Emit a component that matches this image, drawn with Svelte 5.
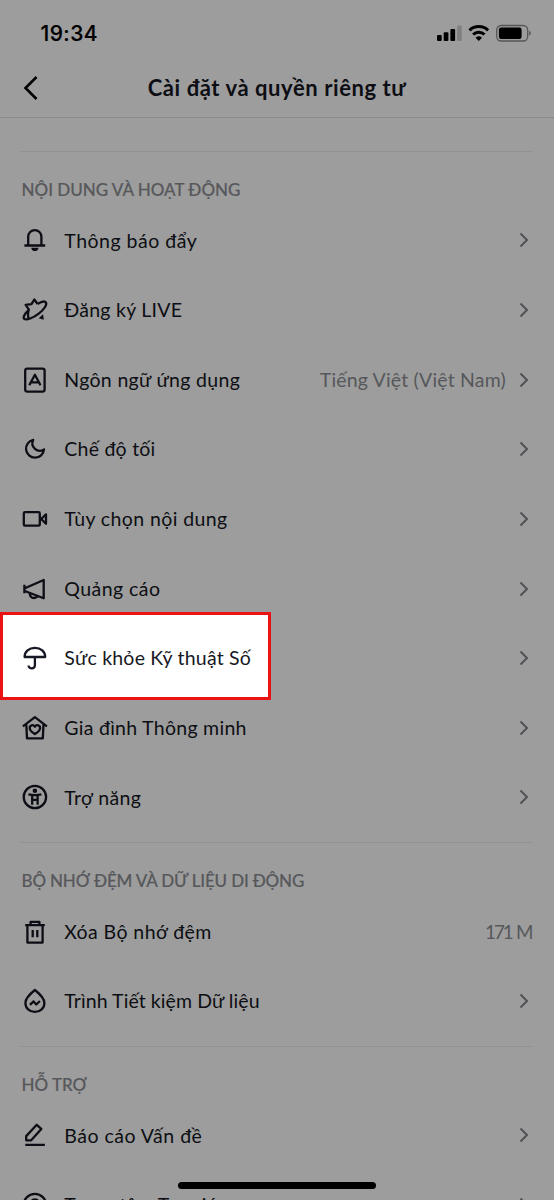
<script>
  const sections = [
    {
      title: 'NỘI DUNG VÀ HOẠT ĐỘNG',
      tracking: 0,
      rows: [
        { icon: 'bell', label: 'Thông báo đẩy', tracking: 0.5 },
        { icon: 'star', label: 'Đăng ký LIVE', tracking: 0.25 },
        { icon: 'lang', label: 'Ngôn ngữ ứng dụng', tracking: 0.32, value: 'Tiếng Việt (Việt Nam)' },
        { icon: 'moon', label: 'Chế độ tối', tracking: 0.24 },
        { icon: 'video', label: 'Tùy chọn nội dung', tracking: 0.4 },
        { icon: 'horn', label: 'Quảng cáo', tracking: 0.45 },
        { icon: 'umbrella', label: 'Sức khỏe Kỹ thuật Số', tracking: 0.22 },
        { icon: 'home', label: 'Gia đình Thông minh', tracking: 0.28 },
        { icon: 'access', label: 'Trợ năng', tracking: 0.38 }
      ]
    },
    {
      title: 'BỘ NHỚ ĐỆM VÀ DỮ LIỆU DI ĐỘNG',
      tracking: -0.16,
      rows: [
        { icon: 'trash', label: 'Xóa Bộ nhớ đệm', tracking: 0.42, value: '171 M', plain: true },
        { icon: 'drop', label: 'Trình Tiết kiệm Dữ liệu', tracking: 0.08 }
      ]
    },
    {
      title: 'HỖ TRỢ',
      tracking: 0,
      rows: [
        { icon: 'pen', label: 'Báo cáo Vấn đề', tracking: 0.5 },
        { icon: 'help', label: 'Trung tâm Trợ giúp', tracking: 0.3 }
      ]
    }
  ];
</script>

{#snippet glyph(name)}
  <svg class="icon" viewBox="0 0 28 28">
    {#if name === 'bell'}
      <path d="M7.200 19.500V10.700a6.600 6.600 0 0 1 13.200 0v8.800M3.400 19.500h20.800" />
      <path class="fill" d="M10.200 21.700h7.400c-.3 2.100-1.700 3.400-3.700 3.400s-3.400-1.300-3.700-3.400z" />
    {:else if name === 'star'}
      <path d="M16.600 8 13.300 3.500 10.500 8.100 4.600 8.900 7.800 13.400 7 17.500 7.400 23.300" />
      <path d="M16.600 8C20.500 5.500 24 5 24.900 6.400c1.300 2.200-1.600 7-7.200 11.200-5.500 4.300-12.400 7-14.400 5.300-1.600-1.400.3-5.500 4.400-8.800" />
      <path class="fill" d="m17.700 22.300 4.400-4 .7 5.500z" />
    {:else if name === 'lang'}
      <rect x="4.200" y="2.700" width="19.400" height="22.900" rx="2" />
      <path d="M8.300 19.300 13.900 8.700 19.500 19.300M10.200 16.300h7.400" />
    {:else if name === 'moon'}
      <path d="M12.200 4.900A9 9 0 1 0 23 14.500 7.500 7.500 0 0 1 12.200 4.900z" />
    {:else if name === 'video'}
      <rect x="2.800" y="7.200" width="16" height="13.500" rx="1.200" />
      <path d="m25 9.300-4.800 4.700L25 18.800z" />
    {:else if name === 'horn'}
      <path d="M3.400 9.800v8.400M3.800 13.300 22.700 5v18.300L3.800 16M8.700 18.300c.2 3.100 2 4.700 4.400 4.700 1.700 0 3.100-.9 3.600-2.300" />
    {:else if name === 'umbrella'}
      <path d="M3.600 13C3.600 7.600 8 3.800 13.900 3.800S24.200 7.600 24.200 13zM13.900 13v8.300c0 4-6.300 4-6.300.2" />
    {:else if name === 'home'}
      <path d="M1.900 12.300 13.900 3.100l12 9.200M5.300 10.500l.7 13.900h15.800l.7-13.900" />
      <path d="M13.900 20C10.400 17.900 8.700 15.900 8.700 13.900c0-2.900 3.700-3.700 5.200-1.200 1.500-2.500 5.200-1.700 5.200 1.200 0 2-1.700 4-5.200 6.100z" />
    {:else if name === 'access'}
      <circle cx="13.900" cy="14" r="11.200" />
      <circle class="fill" cx="13.900" cy="7.700" r="2.300" />
      <path d="M7.400 11.300c4.300 1 8.700 1 13 0M11.200 12v9.700M16.600 12v9.700M11.200 16.800h5.400" />
    {:else if name === 'trash'}
      <path d="M4.200 7.200h19.600M9.600 6.900V3.900h8.800v3M6.400 7.600v17h15.200v-17M11.700 12v7.300M16.300 12v7.300" />
    {:else if name === 'drop'}
      <path d="M13.900 3c5 4 9.500 7.900 9.500 12.900 0 5.300-4 9-9.500 9s-9.500-3.700-9.500-9C4.400 10.900 8.900 7 13.900 3z" />
      <path d="M8.900 17.900 12.600 14.400 15.300 17.500 18.900 14" />
    {:else if name === 'pen'}
      <path d="M4.300 23.900h19.600M5.200 19.300v-4.200L15.700 3.800l4.600 4.100L10.200 19.300z" />
    {:else}
      <circle cx="13.900" cy="14" r="11.200" />
      <path d="M10.500 11.500c0-4 6.800-4 6.800 0 0 2.800-3.400 2.500-3.400 5" />
    {/if}
  </svg>
{/snippet}

<div class="phone">
  <div class="status">
    <span class="time">19:34</span>
    <svg class="signals" width="98" height="20" viewBox="0 0 98 20">
      <rect x="0" y="11" width="4.700" height="6" rx="1" />
      <rect x="6.700" y="8.300" width="4.700" height="8.700" rx="1" />
      <rect x="13.400" y="5" width="4.700" height="12" rx="1" />
      <rect x="20.100" y="1.500" width="4.700" height="15.500" rx="1" opacity=".18" />
      <g fill="none" stroke="#000" stroke-width="3">
        <path d="M32.500 6.300a13.500 13.500 0 0 1 18.600 0" />
        <path d="M36.100 10.500a8.400 8.400 0 0 1 11.400 0" />
      </g>
      <path d="M38.600 13.700a5 5 0 0 1 6.400 0L41.800 17z" />
      <rect x="59.700" y="1.500" width="31" height="15.500" rx="4.500" fill="none" stroke="#000" stroke-opacity=".45" stroke-width="1.300" />
      <rect x="61.900" y="3.500" width="22.700" height="11.500" rx="2.200" />
      <path d="M92.300 6.800c2 .8 2 4 0 4.800z" opacity=".5" />
    </svg>
  </div>
  <header>
    <svg class="back" width="16" height="26" viewBox="0 0 16 26"><path d="M13.500 2 2.500 13l11 11" /></svg>
    <h1>Cài đặt và quyền riêng tư</h1>
  </header>
  <main>
    {#each sections as section}
      <section>
        <h2 style:letter-spacing="{section.tracking}px">{section.title}</h2>
        {#each section.rows as row}
          <div class="row">
            {@render glyph(row.icon)}
            <span class="label" style:letter-spacing="{row.tracking}px">{row.label}</span>
            {#if row.value}<span class="value" class:plain={row.plain}>{row.value}</span>{/if}
            {#if !row.plain}
              <svg class="chevron" width="10" height="16" viewBox="0 0 10 16"><path d="m1.500 1.500 6.500 6.500-6.500 6.500" /></svg>
            {/if}
          </div>
        {/each}
      </section>
    {/each}
  </main>
  <div class="home-bar"></div>
  <div class="spotlight"></div>
</div>

<style>
  .phone {
    position: relative;
    width: 554px;
    height: 1200px;
    overflow: hidden;
    background: #fff;
    color: #161823;
    font-family: Lato, 'Noto Sans', sans-serif;
  }
  .status {
    display: flex;
    justify-content: space-between;
    align-items: center;
    height: 66px;
    padding: 2px 19.500px 0 40.500px;
    box-sizing: border-box;
  }
  .time {
    margin-top: -2px;
    font: 500 21px Inter, sans-serif;
    letter-spacing: 0.45px;
    color: #000;
    -webkit-text-stroke: 0.2px #000;
  }
  header {
    position: relative;
    display: flex;
    align-items: center;
    justify-content: center;
    height: 52px;
    padding-bottom: 9px;
    box-sizing: border-box;
    border-bottom: 1px solid #e0e0e0;
  }
  .back {
    position: absolute;
    left: 23px;
    top: 9px;
    fill: none;
    stroke: #000;
    stroke-width: 2.6;
  }
  h1 {
    margin: 0;
    font-size: 22px;
    font-weight: 700;
    letter-spacing: 0.58px;
    white-space: nowrap;
  }
  main {
    padding: 33px 21px 0;
  }
  section {
    border-top: 1px solid #ececec;
    padding-bottom: 9.500px;
  }
  h2 {
    margin: 0;
    height: 54px;
    padding: 26px 0 0 0.500px;
    box-sizing: border-box;
    font-size: 17px;
    line-height: 23px;
    font-weight: 500;
    color: #8e8f95;
    white-space: nowrap;
    -webkit-text-stroke: 0.15px #8e8f95;
  }
  .row {
    display: flex;
    align-items: center;
    height: 69.650px;
    font-size: 19.500px;
    white-space: nowrap;
  }
  .icon {
    width: 28px;
    height: 28px;
    margin: -1px 15.300px 0 0;
    fill: none;
    stroke: #161823;
    stroke-width: 2.3;
    stroke-linejoin: round;
  }
  .icon .fill {
    fill: #161823;
    stroke: none;
  }
  .label {
    flex: 1;
    padding-bottom: 1.600px;
  }
  .value {
    padding-bottom: 1.600px;
    color: #8e8f95;
    letter-spacing: 0.18px;
  }
  .value.plain {
    font-size: 18.800px;
    letter-spacing: -2px;
    word-spacing: 1.400px;
    margin-right: 1.600px;
  }
  .chevron {
    margin: -1px 4px 0 13px;
    fill: none;
    stroke: #83848a;
    stroke-width: 2;
  }
  .home-bar {
    position: absolute;
    left: 178px;
    bottom: 11px;
    width: 198px;
    height: 7px;
    border-radius: 4px;
    background: #000;
  }
  .spotlight {
    position: absolute;
    left: 0;
    top: 612px;
    width: 271px;
    height: 88px;
    box-sizing: border-box;
    border: 3px solid #ea1212;
    box-shadow: 0 0 0 1300px rgba(0, 0, 0, 0.385);
  }
</style>
